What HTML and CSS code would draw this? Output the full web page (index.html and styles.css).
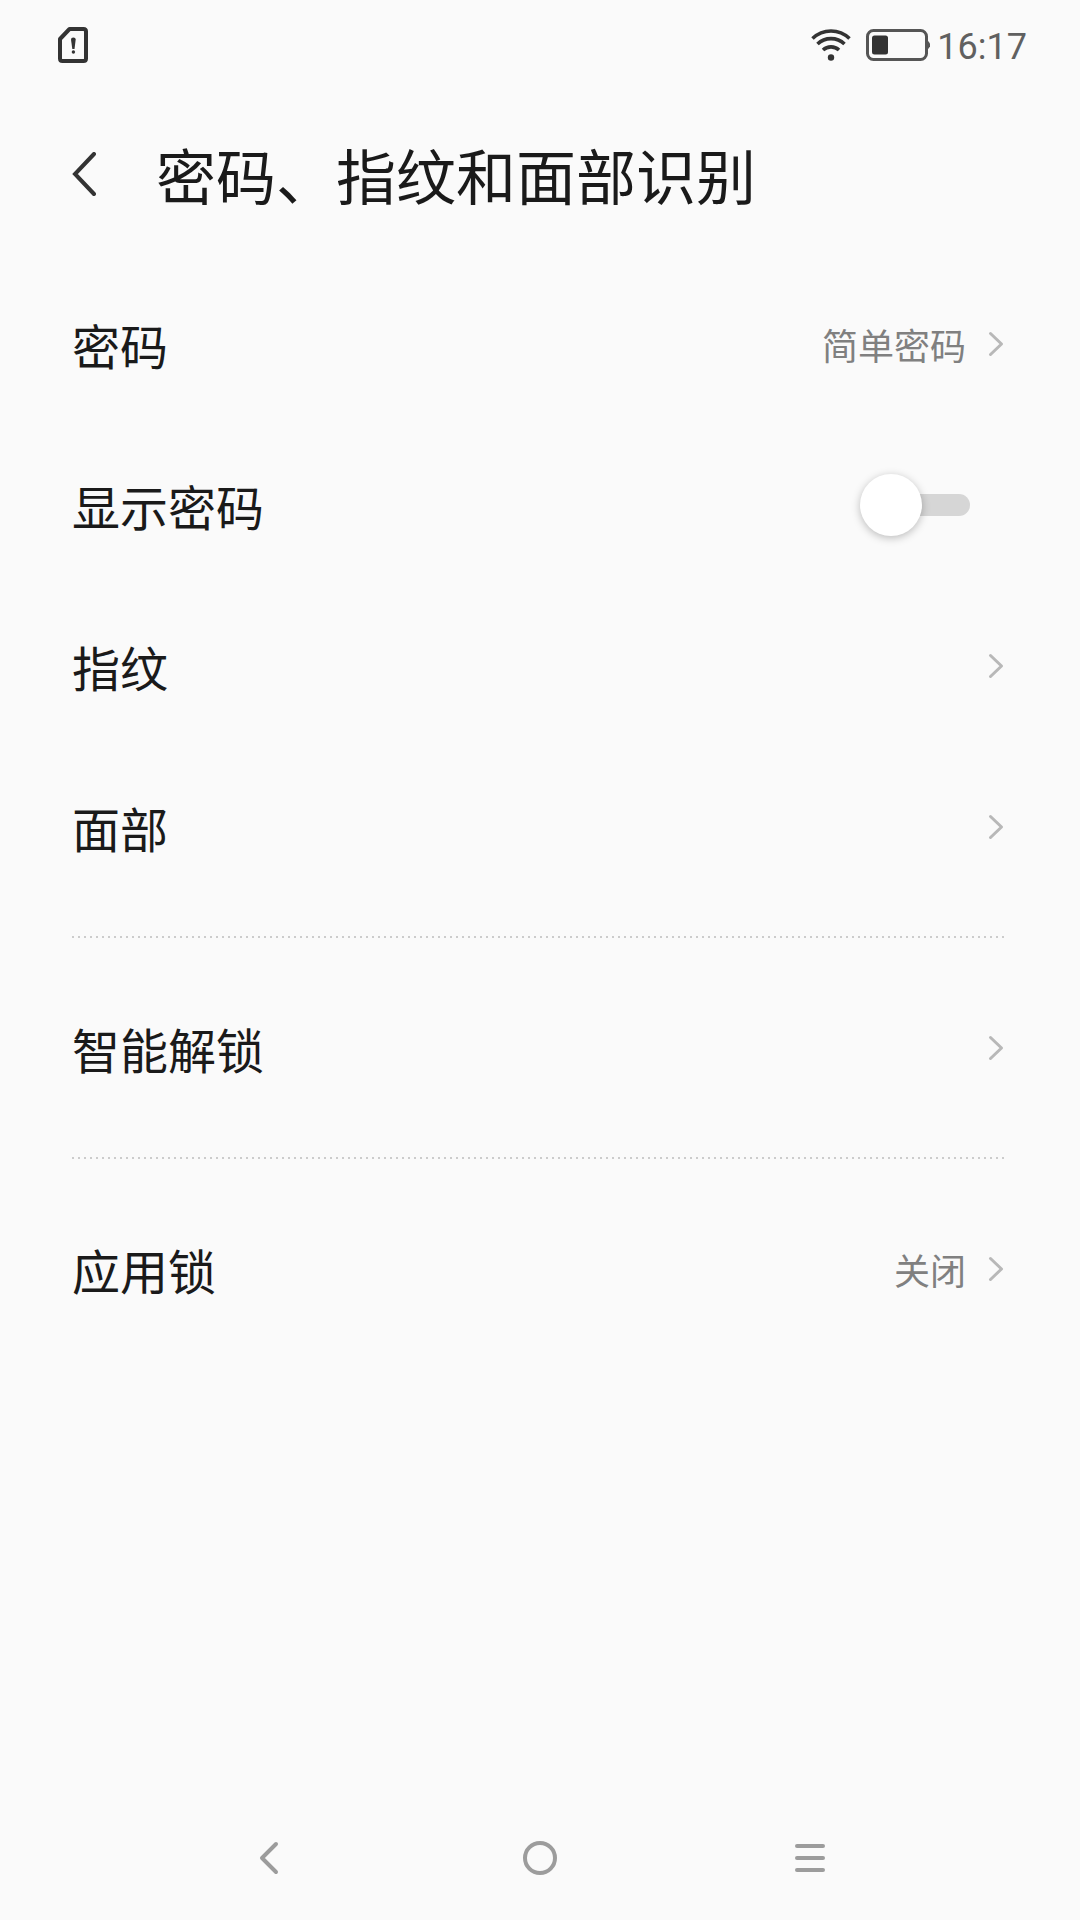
FILE: index.html
```html
<!DOCTYPE html>
<html lang="zh-CN">
	<head>
		<meta charset="UTF-8">
		<meta content="width=device-width, initial-scale=1" name="viewport">
		<title>密码、指纹和面部识别</title>
		<link rel="stylesheet" href="styles.css">
	</head>
	<body>
		<div class="status">
			<svg class="sim" width="30" height="36" viewBox="0 0 30 36">
				<path d="M11.5 2H25.5Q28 2 28 4.500V31.500Q28 34 25.500 34H4.500Q2 34 2 31.500V12Z" fill="none" stroke="#333" stroke-width="4" stroke-linejoin="round"/>
				<path d="M13 12.500Q13 10.500 15.300 10.500Q17.700 10.500 17.700 12.500L16.500 22H14.300Z" fill="#333"/>
				<circle cx="15.400" cy="25" r="1.700" fill="#333"/>
			</svg>
			<div class="system">
				<svg width="40" height="32" viewBox="0 0 40 32">
					<g fill="none" stroke="#333" stroke-width="3.600">
						<path d="M1.500 9.500C12 -0.500 28 -0.500 38.500 9.500"/>
						<path d="M6.500 15C14 7.800 26 7.800 33.500 15"/>
						<path d="M12 21C16.500 16.800 23.500 16.800 28 21"/>
					</g>
					<circle cx="20" cy="28.500" r="3.200" fill="#333"/>
				</svg>
				<svg width="64" height="32" viewBox="0 0 64 32">
					<path d="M60 10.500H61L64 14.500V17.500L61 21.500H60Z" fill="#555"/>
					<rect x="1.500" y="1.500" width="59" height="29" rx="6" fill="none" stroke="#555" stroke-width="3"/>
					<rect x="6" y="6.500" width="16" height="19" rx="2.500" fill="#333"/>
				</svg>
				<span class="time">16:17</span>
			</div>
		</div>
		<header class="header">
			<button class="back" type="button" aria-label="返回">
				<svg width="24" height="44" viewBox="0 0 24 44">
					<path d="M22 2L3 22L22 42" fill="none" stroke="#333" stroke-width="4" stroke-linecap="round"/>
				</svg>
			</button>
			<h1>密码、指纹和面部识别</h1>
		</header>
		<main class="list">
			<a class="row" href="#">
				<span class="label">密码</span>
				<span class="value">简单密码</span>
				<svg class="arrow" viewBox="0 0 16 26"><path d="M2.500 2.500L13.500 13L2.500 23.500"/></svg>
			</a>
			<div class="row">
				<label class="label" for="show">显示密码</label>
				<input class="switch" id="show" type="checkbox">
			</div>
			<a class="row" href="#">
				<span class="label">指纹</span>
				<svg class="arrow" viewBox="0 0 16 26"><path d="M2.500 2.500L13.500 13L2.500 23.500"/></svg>
			</a>
			<a class="row" href="#">
				<span class="label">面部</span>
				<svg class="arrow" viewBox="0 0 16 26"><path d="M2.500 2.500L13.500 13L2.500 23.500"/></svg>
			</a>
			<hr>
			<a class="row" href="#">
				<span class="label">智能解锁</span>
				<svg class="arrow" viewBox="0 0 16 26"><path d="M2.500 2.500L13.500 13L2.500 23.500"/></svg>
			</a>
			<hr>
			<a class="row" href="#">
				<span class="label">应用锁</span>
				<span class="value">关闭</span>
				<svg class="arrow" viewBox="0 0 16 26"><path d="M2.500 2.500L13.500 13L2.500 23.500"/></svg>
			</a>
		</main>
		<nav class="nav">
			<button type="button" aria-label="返回">
				<svg width="36" height="36" viewBox="0 0 36 36"><path d="M24 4L10 18L24 32"/></svg>
			</button>
			<button type="button" aria-label="主页">
				<svg width="36" height="36" viewBox="0 0 36 36"><circle cx="18" cy="18" r="15"/></svg>
			</button>
			<button type="button" aria-label="菜单">
				<svg width="36" height="36" viewBox="0 0 36 36"><path d="M5 6H31M5 18H31M5 30H31"/></svg>
			</button>
		</nav>
	</body>
</html>
```
FILE: styles.css
```css
* {
	box-sizing: border-box;
}
body {
	margin: 0;
	min-height: 100vh;
	display: flex;
	flex-direction: column;
	background: #fafafa;
	color: #1a1a1a;
	font-family: "Noto Sans CJK SC", sans-serif;
}
svg {
	display: block;
	flex: none;
}
button {
	border: 0;
	padding: 0;
	background: none;
	cursor: pointer;
}
.status {
	height: 90px;
	padding: 0 53px 0 58px;
	display: flex;
	align-items: center;
	justify-content: space-between;
}
.system {
	display: flex;
	align-items: center;
	gap: 15px;
}
.time {
	margin-left: -8px;
	padding-top: 4px;
	color: #606060;
	font: 400 36px/36px Roboto, sans-serif;
}
.header {
	height: 168px;
	padding: 0 72px;
	display: flex;
	align-items: center;
	gap: 60px;
}
h1 {
	margin: 0;
	font-size: 60px;
	line-height: 88px;
	font-weight: 400;
}
.list {
	flex: 1;
	padding: 5px 76px 0 72px;
}
.row {
	height: 161px;
	display: flex;
	align-items: center;
	gap: 22px;
	color: inherit;
	text-decoration: none;
}
.label {
	flex: 1;
	font-size: 48px;
	line-height: 70px;
}
.value {
	color: #808080;
	font-size: 36px;
	line-height: 52px;
}
.arrow {
	width: 16px;
	height: 26px;
	fill: none;
	stroke: #b8b8b8;
	stroke-width: 3;
	stroke-linecap: round;
	stroke-linejoin: round;
}
.switch {
	appearance: none;
	width: 110px;
	height: 62px;
	margin: 0 34px 0 0;
	display: flex;
	align-items: center;
	cursor: pointer;
}
/* knob */
.switch::before {
	content: "";
	flex: none;
	z-index: 1;
	width: 62px;
	height: 62px;
	border-radius: 50%;
	background: #fff;
	box-shadow: 0 2px 8px rgba(0, 0, 0, .25);
}
/* track, partly under the knob */
.switch::after {
	content: "";
	flex: 1;
	height: 22px;
	margin-left: -31px;
	border-radius: 11px;
	background: #d6d6d6;
}
.switch:checked {
	flex-direction: row-reverse;
}
.switch:checked::after {
	margin: 0 -31px 0 0;
	background: #5a8dee;
}
hr {
	height: 2px;
	margin: 29px 0;
	border: 0;
	background: repeating-linear-gradient(90deg, #ccc 0 2px, transparent 2px 6px);
}
.nav {
	height: 124px;
	padding: 0 12.5%;
	display: flex;
}
.nav button {
	flex: 1;
	display: flex;
	align-items: center;
	justify-content: center;
}
.nav svg {
	fill: none;
	stroke: #9c9c9c;
	stroke-width: 4;
	stroke-linecap: round;
	stroke-linejoin: round;
}
```
